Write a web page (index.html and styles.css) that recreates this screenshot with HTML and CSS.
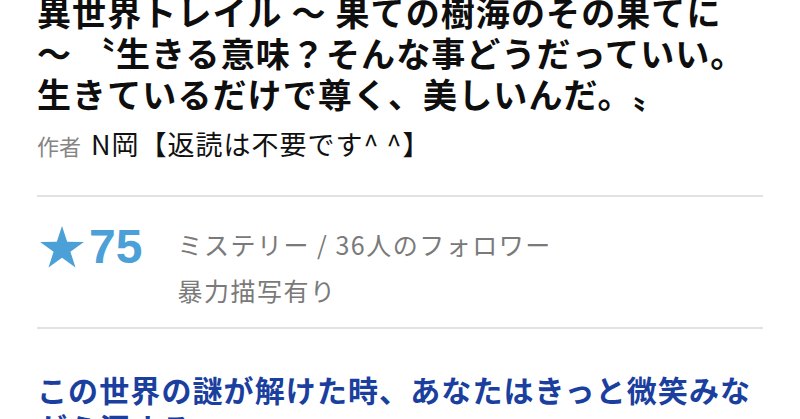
FILE: index.html
```html
<!DOCTYPE html>
<html lang="ja">
<head>
<meta charset="utf-8">
<link rel="stylesheet" href="styles.css">
</head>
<body>
<div class="page">
  <h1 class="title">異世界トレイル 〜 果ての樹海のその果てに<br>〜 〝生きる意味？そんな事どうだっていい。<br>生きているだけで尊く、美しいんだ。〟</h1>
  <p class="author"><span class="author-label">作者</span><span class="author-name">N岡【返読は不要です^ ^】</span></p>
  <div class="stats">
    <div class="score">
      <svg class="star" viewBox="0 0 44 42" width="44" height="42"><polygon points="22,0 27.2,15.8 43.9,15.9 30.4,25.7 35.5,41.6 22,31.8 8.5,41.6 13.6,25.7 0.1,15.9 16.8,15.8"/></svg>
      <span class="score-num">75</span>
    </div>
    <div class="meta">
      <div class="meta-line">ミステリー / 36人のフォロワー</div>
      <div class="meta-line">暴力描写有り</div>
    </div>
  </div>
  <p class="catch">この世界の謎が解けた時、あなたはきっと微笑みながら涙する。</p>
</div>
</body>
</html>
```
FILE: styles.css
```css
html, body {
  margin: 0;
  padding: 0;
  background: #ffffff;
  overflow: hidden;
}
body {
  font-family: "Noto Sans CJK JP", "Noto Sans", sans-serif;
  color: #111111;
  text-spacing-trim: space-all;
}
.page {
  width: 726px;
  padding: 0 37px;
}
.title {
  margin: -9px 0 0;
  font-size: 34px;
  font-weight: 700;
  letter-spacing: 1.1px;
  line-height: 41px;
  color: #0e0e0e;
  white-space: nowrap;
}
.author {
  margin: 15px 0 0;
  line-height: 30px;
  white-space: nowrap;
  padding-bottom: 32px;
  border-bottom: 2px solid #e2e2e2;
}
.author-label {
  font-size: 22px;
  color: #858585;
  margin-right: 10px;
}
.author-name {
  font-size: 27px;
  letter-spacing: 1px;
  color: #111111;
}
.stats {
  display: flex;
  align-items: flex-start;
  gap: 35px;
  padding: 24px 0 14px;
  border-bottom: 2px solid #e2e2e2;
}
.score {
  display: flex;
  align-items: center;
  gap: 5px;
  margin-top: 3px;
  height: 46px;
}
.star {
  fill: #4ba0d7;
  margin-left: 3px;
}
.score-num {
  font-family: "Liberation Sans", Arial, sans-serif;
  font-weight: 700;
  font-size: 48px;
  line-height: 46px;
  color: #4ba0d7;
}
.meta {
  display: flex;
  flex-direction: column;
}
.meta-line {
  font-size: 25px;
  letter-spacing: 1.5px;
  line-height: 46px;
  color: #7a7a7a;
  white-space: nowrap;
}
.catch {
  margin: 41px 0 0;
  font-size: 30px;
  font-weight: 700;
  letter-spacing: 1.1px;
  line-height: 38px;
  color: #1b3f9e;
}
```
